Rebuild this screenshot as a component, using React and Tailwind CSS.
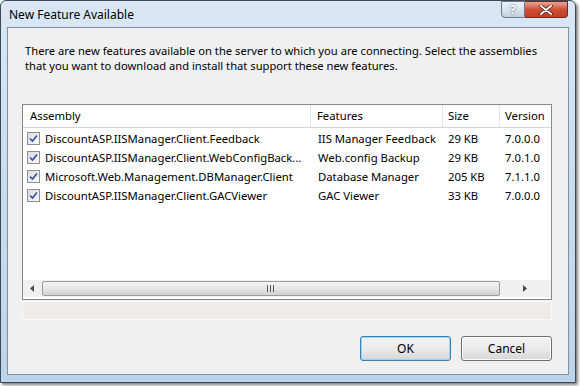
import React from 'react';

const rows = [
  { name: 'DiscountASP.IISManager.Client.Feedback', feature: 'IIS Manager Feedback', size: '29 KB', version: '7.0.0.0' },
  { name: 'DiscountASP.IISManager.Client.WebConfigBack...', feature: 'Web.config Backup', size: '29 KB', version: '7.0.1.0' },
  { name: 'Microsoft.Web.Management.DBManager.Client', feature: 'Database Manager', size: '205 KB', version: '7.1.1.0' },
  { name: 'DiscountASP.IISManager.Client.GACViewer', feature: 'GAC Viewer', size: '33 KB', version: '7.0.0.0' },
];

const Check = () => (
  <span className="flex h-[13px] w-[13px] shrink-0 items-center justify-center border border-[#8f8f8f] bg-gradient-to-br from-[#dcdcdc] to-[#fafafa]">
    <svg width="9" height="9" viewBox="0 0 9 9">
      <path d="M1 4.5 L3.5 7 L8 1.5" fill="none" stroke="#2c4dab" strokeWidth="1.6" />
    </svg>
  </span>
);

const App = () => {
  return (
    <div className="h-[386px] w-[580px] overflow-hidden bg-white font-['Segoe_UI','Noto_Sans',sans-serif] text-[11.3px] text-black">
      <div className="flex h-[383px] w-[576px] flex-col rounded-t-[6px] border border-[#3c4a58] bg-gradient-to-b from-[#d9e7f5] via-[#c9dcef] to-[#bcd4ea] shadow-[2px_2px_3px_rgba(0,0,0,0.5)]">
        <div className="flex h-[26px] items-start justify-between pl-[8px] pr-[7px]">
          <span className="mt-[6px] text-[12px] leading-[16px]">New Feature Available</span>
          <div className="flex">
            <div className="flex h-[17px] w-[24px] items-center justify-center rounded-bl-[4px] border border-[#6b7b8c] bg-gradient-to-b from-[#eef3f8] to-[#c2d1e0] text-[12px] font-bold leading-none text-white [text-shadow:0_0_2px_#37465a]">
              ?
            </div>
            <div className="flex h-[17px] w-[43px] items-center justify-center rounded-br-[4px] border border-l-0 border-[#6b2a1e] bg-gradient-to-b from-[#e8a493] via-[#cd4f35] to-[#c43d22]">
              <svg width="14" height="10" viewBox="0 0 14 10">
                <path d="M2 1 L12 9 M12 1 L2 9" stroke="#3a1a12" strokeWidth="3.4" strokeLinecap="round" />
                <path d="M2 1 L12 9 M12 1 L2 9" stroke="#ffffff" strokeWidth="2" strokeLinecap="round" />
              </svg>
            </div>
          </div>
        </div>
        <div className="mx-[6px] mb-[7px] flex flex-1 flex-col border border-[#7f8f9f] bg-[#f0f0f0] pl-[14px] pr-[16px]">
          <p className="mt-[15px] pl-[3px] text-[11.2px] leading-[15px] whitespace-nowrap">
            There are new features available on the server to which you are connecting. Select the assemblies
            <br />
            that you want to download and install that support these new features.
          </p>
          <div className="mt-[31px] flex h-[196px] flex-col border border-[#828790] bg-white">
            <div className="flex h-[23px] border-b border-[#d5d5d5] bg-white leading-[22px]">
              <div className="w-[288px] border-r border-[#e3e3e3] pl-[7px]">Assembly</div>
              <div className="w-[132px] border-r border-[#e3e3e3] pl-[6px]">Features</div>
              <div className="w-[57px] border-r border-[#e3e3e3] pl-[5px]">Size</div>
              <div className="flex-1 pl-[5px]">Version</div>
            </div>
            <div className="mt-[1px] flex-1">
              {rows.map((r) => (
                <div key={r.name} className="flex h-[19px] items-center leading-[19px]">
                  <div className="flex w-[288px] items-center gap-[5px] pl-[4px]">
                    <Check />
                    <span className="whitespace-nowrap">{r.name}</span>
                  </div>
                  <div className="w-[132px] pl-[7px] whitespace-nowrap">{r.feature}</div>
                  <div className="w-[57px] pl-[5px] whitespace-nowrap">{r.size}</div>
                  <div className="flex-1 pl-[5px] whitespace-nowrap">{r.version}</div>
                </div>
              ))}
            </div>
            <div className="mb-[2px] flex h-[17px] items-center bg-[#f0f0f0]">
              <div className="flex h-full w-[19px] items-center justify-center">
                <svg width="5" height="7" viewBox="0 0 5 7"><path d="M4 0 L0 3.5 L4 7 Z" fill="#4a4a4a" /></svg>
              </div>
              <div className="flex h-[15px] w-[458px] items-center justify-center rounded-[2px] border border-[#9b9b9b] bg-gradient-to-b from-[#f4f4f4] via-[#e6e6e6] to-[#d2d2d2]">
                <svg width="8" height="7" viewBox="0 0 8 7">
                  <path d="M0.5 0 V7 M3.5 0 V7 M6.5 0 V7" stroke="#5a5a5a" strokeWidth="1" />
                </svg>
              </div>
              <div className="flex h-full flex-1 items-center justify-center">
                <svg width="5" height="7" viewBox="0 0 5 7"><path d="M0 0 L4 3.5 L0 7 Z" fill="#4a4a4a" /></svg>
              </div>
            </div>
          </div>
          <div className="mt-[1px] h-[19px] border border-[#f9f9f9] bg-[#efebeb]" />
          <div className="mt-[16px] flex justify-end gap-[10px]">
            <button className="h-[25px] w-[91px] rounded-[3px] border border-[#3c7fb1] bg-gradient-to-b from-[#f2f2f2] via-[#ebebeb] to-[#d6d6d6] text-[12px] shadow-[inset_0_0_0_1px_#98d8f3]">
              OK
            </button>
            <button className="h-[25px] w-[91px] rounded-[3px] border border-[#707070] bg-gradient-to-b from-[#f2f2f2] via-[#ebebeb] to-[#d6d6d6] text-[12px] shadow-[inset_0_0_0_1px_#fcfcfc]">
              Cancel
            </button>
          </div>
        </div>
      </div>
    </div>
  );
};

export default App;
